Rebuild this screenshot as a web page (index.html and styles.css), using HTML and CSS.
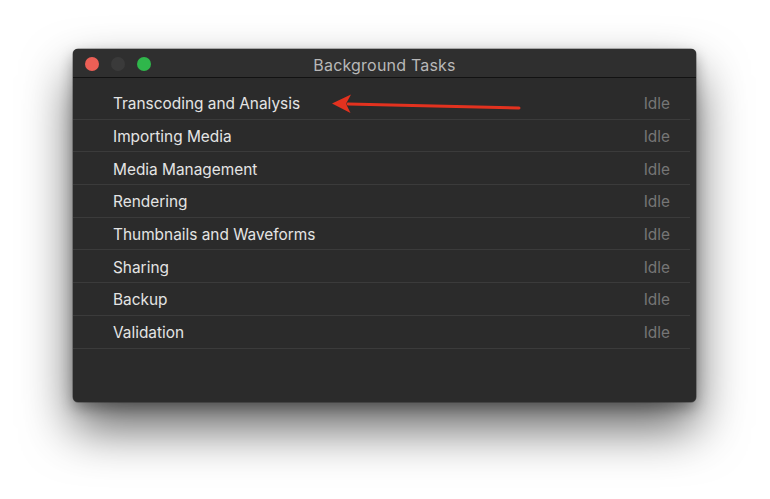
FILE: index.html
```html
<!DOCTYPE html>
<html>
<head>
<meta charset="utf-8">
<link rel="stylesheet" href="styles.css">
</head>
<body>
<div class="stage">
  <div class="window">
    <div class="titlebar">
      <div class="lights">
        <span class="light red"></span>
        <span class="light gray"></span>
        <span class="light green"></span>
      </div>
      <div class="title">Background Tasks</div>
    </div>
    <div class="list">
      <div class="row"><span class="name">Transcoding and Analysis</span><span class="status">Idle</span></div>
      <div class="row"><span class="name">Importing Media</span><span class="status">Idle</span></div>
      <div class="row"><span class="name">Media Management</span><span class="status">Idle</span></div>
      <div class="row"><span class="name">Rendering</span><span class="status">Idle</span></div>
      <div class="row"><span class="name">Thumbnails and Waveforms</span><span class="status">Idle</span></div>
      <div class="row"><span class="name">Sharing</span><span class="status">Idle</span></div>
      <div class="row"><span class="name">Backup</span><span class="status">Idle</span></div>
      <div class="row"><span class="name">Validation</span><span class="status">Idle</span></div>
    </div>
    <svg class="arrow" width="200" height="22" viewBox="0 0 200 22">
      <path d="M187 15 L16 11" stroke="#e3321f" stroke-width="3" stroke-linecap="round" fill="none"/>
      <path d="M0 10.5 L19 1.5 L14 10.8 L18.5 20 Z" fill="#e3321f"/>
    </svg>
  </div>
</div>
</body>
</html>
```
FILE: styles.css
```css
html, body {
  margin: 0;
  padding: 0;
  background: #ffffff;
}
.stage {
  width: 770px;
  height: 499px;
  padding: 49px 0 0 73px;
  box-sizing: border-box;
  overflow: hidden;
}
.window {
  position: relative;
  width: 623px;
  height: 353px;
  background: #2b2b2b;
  border-radius: 5px;
  box-shadow: 0 0 0 0.5px rgba(0,0,0,0.5), 0 26px 50px rgba(0,0,0,0.62), 0 6px 14px rgba(0,0,0,0.3);
  font-family: Inter, "Liberation Sans", sans-serif;
  overflow: hidden;
}
.titlebar {
  position: relative;
  height: 28px;
  background: #2f2f2f;
  border-bottom: 1px solid #121212;
  display: flex;
  align-items: center;
  justify-content: center;
}
.lights {
  position: absolute;
  left: 12px;
  top: 8px;
  display: flex;
  gap: 12px;
}
.light {
  width: 14px;
  height: 14px;
  border-radius: 50%;
  display: block;
}
.red { background: #ec5f56; }
.gray { background: #3a3a3a; }
.green { background: #2fb74b; }
.title {
  color: #b8b8b8;
  font-size: 16px;
  letter-spacing: 0.2px;
  padding-top: 3px;
}
.list {
  padding-top: 9px;
  margin-right: 6px;
}
.row {
  border-bottom: 1px solid #3b3b3b;
  display: flex;
  align-items: center;
  justify-content: space-between;
  padding: 2px 20px 0 40px;
  box-sizing: border-box;
  height: 32.7px;
}
.name {
  color: #e4e4e4;
  font-size: 15.4px;
}
.status {
  color: #767676;
  font-size: 15.4px;
}
.arrow {
  position: absolute;
  left: 259px;
  top: 44px;
}
```
